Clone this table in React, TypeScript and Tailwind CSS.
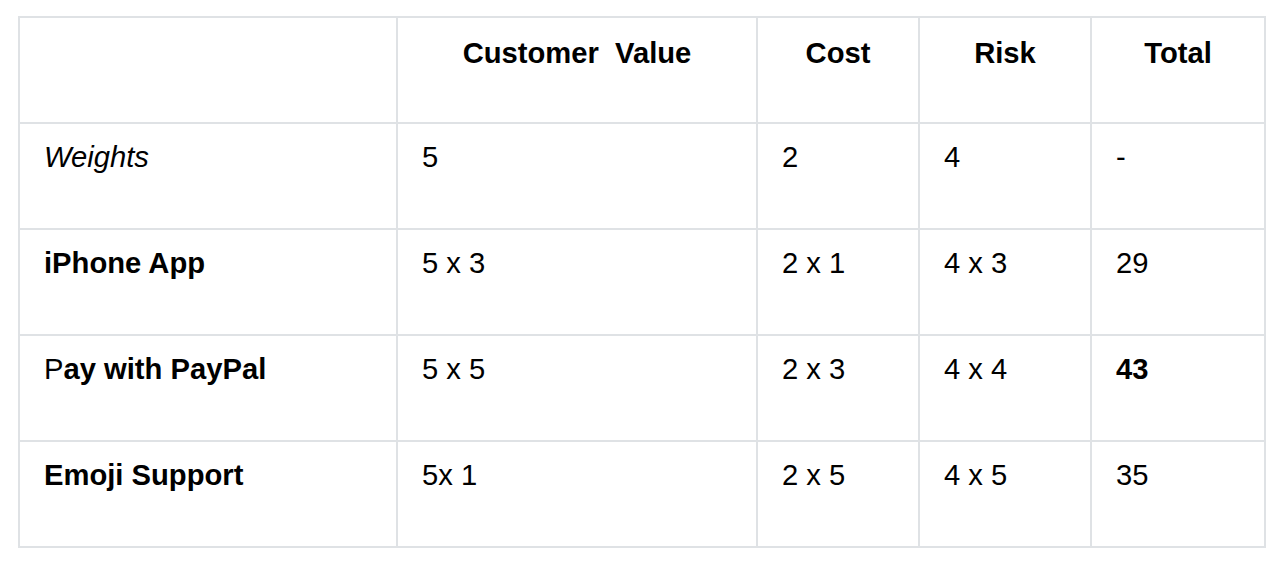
import React from "react";

const headers = ["", "Customer\u00a0 Value", "Cost", "Risk", "Total"];

export default function App() {
  const cell = "bg-white pl-[24px] pt-[17px] h-[104px] text-black";
  const head = "bg-white pt-[19px] h-[104px] text-center font-bold text-black";
  return (
    <div
      className="w-[1284px] h-[568px] bg-white pt-[16px] pl-[18px]"
      style={{ fontFamily: '"Liberation Sans", Arial, sans-serif' }}
    >
      <div className="grid grid-cols-[376px_358px_160px_170px_172px] gap-[2px] p-[2px] bg-[#dfe2e5] w-[1248px] text-[29.2px] leading-[normal]">
        {headers.map((h, i) => (
          <div key={i} className={head}>
            {h}
          </div>
        ))}

        <div className={cell + " italic"}>Weights</div>
        <div className={cell}>5</div>
        <div className={cell}>2</div>
        <div className={cell}>4</div>
        <div className={cell}>-</div>

        <div className={cell + " font-bold"}>iPhone App</div>
        <div className={cell}>5 x 3</div>
        <div className={cell}>2 x 1</div>
        <div className={cell}>4 x 3</div>
        <div className={cell}>29</div>

        <div className={cell}>
          P<span className="font-bold">ay with PayPal</span>
        </div>
        <div className={cell}>5 x 5</div>
        <div className={cell}>2 x 3</div>
        <div className={cell}>4 x 4</div>
        <div className={cell + " font-bold"}>43</div>

        <div className={cell + " font-bold"}>Emoji Support</div>
        <div className={cell}>5x 1</div>
        <div className={cell}>2 x 5</div>
        <div className={cell}>4 x 5</div>
        <div className={cell}>35</div>
      </div>
    </div>
  );
}
